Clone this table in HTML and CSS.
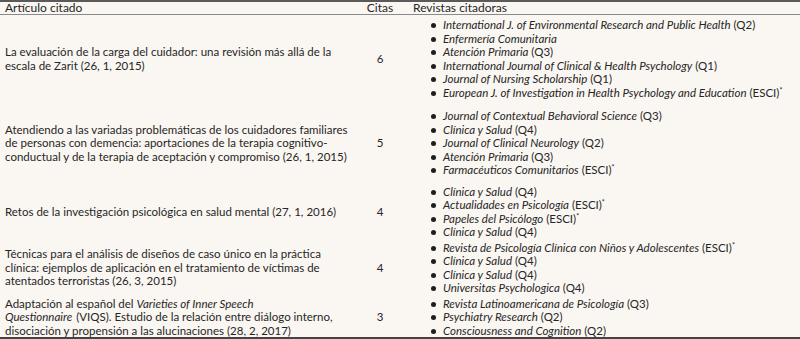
FILE: index.html
```html
<!DOCTYPE html>
<html lang="es">
<head>
<meta charset="utf-8">
<title>Artículos citados</title>
<link rel="stylesheet" href="styles.css">
</head>
<body>
<table class="cites">
  <colgroup>
    <col class="c-art">
    <col class="c-num">
    <col class="c-rev">
  </colgroup>
  <thead>
    <tr>
      <th class="h-art">Artículo citado</th>
      <th class="h-num">Citas</th>
      <th class="h-rev">Revistas citadoras</th>
    </tr>
  </thead>
  <tbody>
    <tr class="r1">
      <td class="art">La evaluación de la carga del cuidador: una revisión más allá de la escala de Zarit (26, 1, 2015)</td>
      <td class="num">6</td>
      <td class="rev">
        <ul>
          <li><i>International J. of Environmental Research and Public Health</i> (Q2)</li>
          <li><i>Enfermería Comunitaria</i></li>
          <li><i>Atención Primaria</i> (Q3)</li>
          <li><i>International Journal of Clinical &amp; Health Psychology</i> (Q1)</li>
          <li><i>Journal of Nursing Scholarship</i> (Q1)</li>
          <li><i>European J. of Investigation in Health Psychology and Education</i> (ESCI)<sup>*</sup></li>
        </ul>
      </td>
    </tr>
    <tr class="r2">
      <td class="art">Atendiendo a las variadas problemáticas de los cuidadores familiares de personas con demencia: aportaciones de la terapia cognitivo-conductual y de la terapia de aceptación y compromiso (26, 1, 2015)</td>
      <td class="num">5</td>
      <td class="rev">
        <ul>
          <li><i>Journal of Contextual Behavioral Science</i> (Q3)</li>
          <li><i>Clínica y Salud</i> (Q4)</li>
          <li><i>Journal of Clinical Neurology</i> (Q2)</li>
          <li><i>Atención Primaria</i> (Q3)</li>
          <li><i>Farmacéuticos Comunitarios</i> (ESCI)<sup>*</sup></li>
        </ul>
      </td>
    </tr>
    <tr class="r3">
      <td class="art">Retos de la investigación psicológica en salud mental (27, 1, 2016)</td>
      <td class="num">4</td>
      <td class="rev">
        <ul>
          <li><i>Clínica y Salud</i> (Q4)</li>
          <li><i>Actualidades en Psicología</i> (ESCI)<sup>*</sup></li>
          <li><i>Papeles del Psicólogo</i> (ESCI)<sup>*</sup></li>
          <li><i>Clínica y Salud</i> (Q4)</li>
        </ul>
      </td>
    </tr>
    <tr class="r4">
      <td class="art">Técnicas para el análisis de diseños de caso único en la práctica clínica: ejemplos de aplicación en el tratamiento de víctimas de atentados terroristas (26, 3, 2015)</td>
      <td class="num">4</td>
      <td class="rev">
        <ul>
          <li><i>Revista de Psicología Clínica con Niños y Adolescentes</i> (ESCI)<sup>*</sup></li>
          <li><i>Clínica y Salud</i> (Q4)</li>
          <li><i>Clínica y Salud</i> (Q4)</li>
          <li><i>Universitas Psychologica</i> (Q4)</li>
        </ul>
      </td>
    </tr>
    <tr class="r5">
      <td class="art">Adaptación al español del <i>Varieties of Inner Speech</i><br><i class="title">Questionnaire</i> (VIQS). Estudio de la relación entre diálogo interno,<br>disociación y propensión a las alucinaciones (28, 2, 2017)</td>
      <td class="num">3</td>
      <td class="rev">
        <ul>
          <li><i>Revista Latinoamericana de Psicología</i> (Q3)</li>
          <li><i>Psychiatry Research</i> (Q2)</li>
          <li><i>Consciousness and Cognition</i> (Q2)</li>
        </ul>
      </td>
    </tr>
  </tbody>
</table>
</body>
</html>
```

FILE: styles.css
```css
html, body {
  margin: 0;
  padding: 0;
  background: #faf6f2;
}

body {
  font-family: Lato, "Noto Sans", sans-serif;
  font-size: 11.5px;
  line-height: 13.5px;
  color: #262626;
}

.cites {
  width: 800px;
  border-collapse: collapse;
  table-layout: fixed;
  border-top: 2px solid #5a5a5a;
  border-bottom: 2px solid #444444;
}

.c-art { width: 362px; }
.c-num { width: 36px; }
.c-rev { width: 402px; }

.cites th {
  font-weight: normal;
  font-size: 12px;
  text-align: left;
  height: 12px;
  line-height: 12px;
  padding: 0;
  border-bottom: 1px solid #8a8a8a;
  white-space: nowrap;
}

.h-art { padding-left: 5px !important; }
.h-num { text-align: center !important; }
.h-rev { padding-left: 15px !important; }

.cites td {
  padding: 0;
  vertical-align: middle;
}

.art {
  padding-left: 5px !important;
  padding-right: 12px !important;
}

.art .title {
  padding-right: 1px;
}

.num {
  text-align: center;
}

.rev ul {
  list-style: none;
  margin: 0;
  padding: 0 0 0 33px;
}

.rev li {
  white-space: nowrap;
}

.rev li::before {
  content: "";
  display: inline-block;
  width: 5px;
  height: 5px;
  border-radius: 50%;
  background: #1e1e1e;
  margin-right: 7px;
  vertical-align: 1px;
}

.rev sup {
  font-size: 7px;
  line-height: 0;
  vertical-align: 4px;
}

.r1 td { padding-top: 3px; padding-bottom: 5px; }
.r2 td { padding-top: 5px; padding-bottom: 4px; }
.r3 td { padding-top: 4px; padding-bottom: 1px; }
.r4 td { padding-top: 1px; padding-bottom: 1px; }
.r5 td { padding-top: 1px; padding-bottom: 0; }
```
